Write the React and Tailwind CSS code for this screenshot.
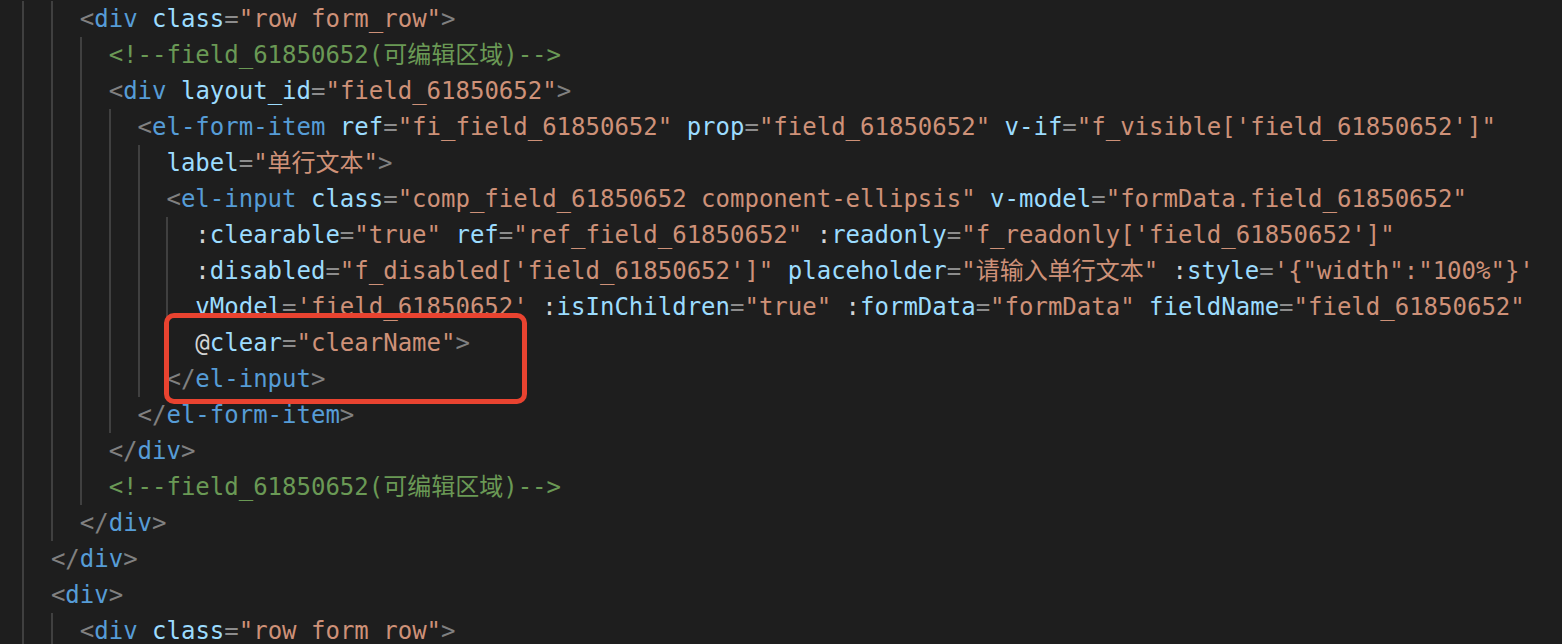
import React from "react";

const colors = {
  p: "text-[#808080]",
  t: "text-[#569cd6]",
  a: "text-[#9cdcfe]",
  e: "text-[#8c8c8c]",
  s: "text-[#ce9178]",
  c: "text-[#6a9955]",
  w: "text-[#d4d4d4]",
  _: "",
};

const comment = [["c", "<!--field_61850652(可编辑区域)-->"]];
const rowDiv = [
  ["p", "<"], ["t", "div"], ["_", " "], ["a", "class"], ["e", "="], ["s", '"row form_row"'], ["p", ">"],
];

const lines = [
  [4, rowDiv],
  [6, comment],
  [6, [["p", "<"], ["t", "div"], ["_", " "], ["a", "layout_id"], ["e", "="], ["s", '"field_61850652"'], ["p", ">"]]],
  [8, [
    ["p", "<"], ["t", "el-form-item"], ["_", " "],
    ["a", "ref"], ["e", "="], ["s", '"fi_field_61850652"'], ["_", " "],
    ["a", "prop"], ["e", "="], ["s", '"field_61850652"'], ["_", " "],
    ["a", "v-if"], ["e", "="], ["s", "\"f_visible['field_61850652']\""],
  ]],
  [10, [["a", "label"], ["e", "="], ["s", '"单行文本"'], ["p", ">"]]],
  [10, [
    ["p", "<"], ["t", "el-input"], ["_", " "],
    ["a", "class"], ["e", "="], ["s", '"comp_field_61850652 component-ellipsis"'], ["_", " "],
    ["a", "v-model"], ["e", "="], ["s", '"formData.field_61850652"'],
  ]],
  [12, [
    ["w", ":"], ["a", "clearable"], ["e", "="], ["s", '"true"'], ["_", " "],
    ["a", "ref"], ["e", "="], ["s", '"ref_field_61850652"'], ["_", " "],
    ["w", ":"], ["a", "readonly"], ["e", "="], ["s", "\"f_readonly['field_61850652']\""],
  ]],
  [12, [
    ["w", ":"], ["a", "disabled"], ["e", "="], ["s", "\"f_disabled['field_61850652']\""], ["_", " "],
    ["a", "placeholder"], ["e", "="], ["s", '"请输入单行文本"'], ["_", " "],
    ["w", ":"], ["a", "style"], ["e", "="], ["s", "'{\"width\":\"100%\"}'"],
  ]],
  [12, [
    ["a", "vModel"], ["e", "="], ["s", "'field_61850652'"], ["_", " "],
    ["w", ":"], ["a", "isInChildren"], ["e", "="], ["s", '"true"'], ["_", " "],
    ["w", ":"], ["a", "formData"], ["e", "="], ["s", '"formData"'], ["_", " "],
    ["a", "fieldName"], ["e", "="], ["s", '"field_61850652"'],
  ]],
  [12, [["w", "@"], ["a", "clear"], ["e", "="], ["s", '"clearName"'], ["p", ">"]]],
  [10, [["p", "</"], ["t", "el-input"], ["p", ">"]]],
  [8, [["p", "</"], ["t", "el-form-item"], ["p", ">"]]],
  [6, [["p", "</"], ["t", "div"], ["p", ">"]]],
  [6, comment],
  [4, [["p", "</"], ["t", "div"], ["p", ">"]]],
  [2, [["p", "</"], ["t", "div"], ["p", ">"]]],
  [2, [["p", "<"], ["t", "div"], ["p", ">"]]],
  [4, rowDiv],
];

function Line({ indent, tokens }) {
  const guides = Array.from({ length: indent / 2 });
  return (
    <div className="flex h-[36px] items-center whitespace-pre">
      {guides.map((_, i) => (
        <span key={i} className="h-full w-[2ch] shrink-0 border-l-2 border-[#404040]" />
      ))}
      <span>
        {tokens.map(([type, text], i) => (
          <span key={i} className={colors[type]}>
            {text}
          </span>
        ))}
      </span>
    </div>
  );
}

export default function App() {
  return (
    <div
      className="relative h-[644px] w-full overflow-hidden bg-[#1e1e1e] pl-[22px] pt-px text-[24px] leading-[36px] text-[#d4d4d4]"
      style={{ fontFamily: '"DejaVu Sans Mono", "Noto Sans CJK SC", monospace' }}
    >
      {lines.map(([indent, tokens], i) => (
        <Line key={i} indent={indent} tokens={tokens} />
      ))}
      <div className="pointer-events-none absolute left-[164px] top-[313px] h-[91px] w-[363px] rounded-[10px] border-[5px] border-[#e94330]" />
    </div>
  );
}
